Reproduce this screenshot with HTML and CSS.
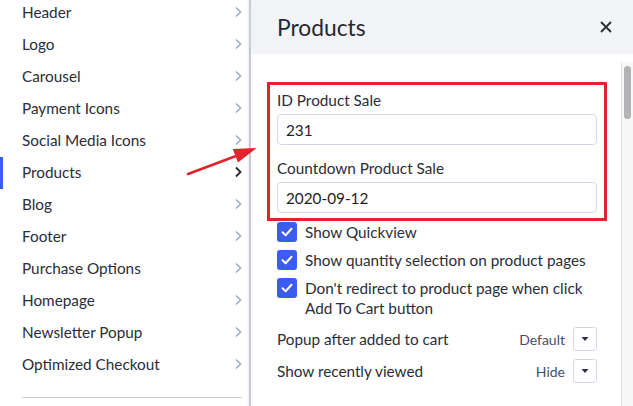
FILE: index.html
```html
<!DOCTYPE html>
<html lang="en">
<head>
<meta charset="utf-8">
<title>Products</title>
<link rel="stylesheet" href="styles.css">
</head>
<body>
<div class="app">
  <nav class="sidebar">
    <ul class="menu">
      <li class="menu-item"><span>Header</span><svg class="chev" viewBox="0 0 8 12"><path d="M2 1.5 L6.5 6 L2 10.5"/></svg></li>
      <li class="menu-item"><span>Logo</span><svg class="chev" viewBox="0 0 8 12"><path d="M2 1.5 L6.5 6 L2 10.5"/></svg></li>
      <li class="menu-item"><span>Carousel</span><svg class="chev" viewBox="0 0 8 12"><path d="M2 1.5 L6.5 6 L2 10.5"/></svg></li>
      <li class="menu-item"><span>Payment Icons</span><svg class="chev" viewBox="0 0 8 12"><path d="M2 1.5 L6.5 6 L2 10.5"/></svg></li>
      <li class="menu-item"><span>Social Media Icons</span><svg class="chev" viewBox="0 0 8 12"><path d="M2 1.5 L6.5 6 L2 10.5"/></svg></li>
      <li class="menu-item active"><span>Products</span><svg class="chev" viewBox="0 0 8 12"><path d="M2 1.5 L6.5 6 L2 10.5"/></svg></li>
      <li class="menu-item"><span>Blog</span><svg class="chev" viewBox="0 0 8 12"><path d="M2 1.5 L6.5 6 L2 10.5"/></svg></li>
      <li class="menu-item"><span>Footer</span><svg class="chev" viewBox="0 0 8 12"><path d="M2 1.5 L6.5 6 L2 10.5"/></svg></li>
      <li class="menu-item"><span>Purchase Options</span><svg class="chev" viewBox="0 0 8 12"><path d="M2 1.5 L6.5 6 L2 10.5"/></svg></li>
      <li class="menu-item"><span>Homepage</span><svg class="chev" viewBox="0 0 8 12"><path d="M2 1.5 L6.5 6 L2 10.5"/></svg></li>
      <li class="menu-item"><span>Newsletter Popup</span><svg class="chev" viewBox="0 0 8 12"><path d="M2 1.5 L6.5 6 L2 10.5"/></svg></li>
      <li class="menu-item"><span>Optimized Checkout</span><svg class="chev" viewBox="0 0 8 12"><path d="M2 1.5 L6.5 6 L2 10.5"/></svg></li>
    </ul>
    <div class="divider"></div>
  </nav>

  <section class="panel">
    <header class="panel-header">
      <h1 class="panel-title">Products</h1>
      <svg class="close" viewBox="0 0 12 12"><path d="M1 1 L11 11 M11 1 L1 11"/></svg>
    </header>
    <div class="panel-body">
      <div class="panel-content">
        <div class="highlight">
          <div class="field-label">ID Product Sale</div>
          <input class="text-input" type="text" value="231">
          <div class="field-label second">Countdown Product Sale</div>
          <input class="text-input" type="text" value="2020-09-12">
        </div>
        <div class="options">
          <div class="check-row">
            <span class="checkbox"><svg viewBox="0 0 20 20"><path d="M5.5 10.2 L8.6 13.2 L14.5 6.8"/></svg></span>
            <span class="check-text">Show Quickview</span>
          </div>
          <div class="check-row">
            <span class="checkbox"><svg viewBox="0 0 20 20"><path d="M5.5 10.2 L8.6 13.2 L14.5 6.8"/></svg></span>
            <span class="check-text">Show quantity selection on product pages</span>
          </div>
          <div class="check-row">
            <span class="checkbox"><svg viewBox="0 0 20 20"><path d="M5.5 10.2 L8.6 13.2 L14.5 6.8"/></svg></span>
            <span class="check-text">Don't redirect to product page when click Add To Cart button</span>
          </div>
          <div class="select-row first">
            <span class="select-label">Popup after added to cart</span>
            <span class="select-value">Default</span>
            <span class="select-btn"><svg viewBox="0 0 8 6"><path d="M0.5 1 L7.5 1 L4 5 Z"/></svg></span>
          </div>
          <div class="select-row">
            <span class="select-label">Show recently viewed</span>
            <span class="select-value">Hide</span>
            <span class="select-btn"><svg viewBox="0 0 8 6"><path d="M0.5 1 L7.5 1 L4 5 Z"/></svg></span>
          </div>
        </div>
      </div>
      <div class="scrollbar"><div class="thumb"></div></div>
    </div>
  </section>

  <svg class="annotation" viewBox="0 0 633 406">
    <line x1="188" y1="174" x2="240" y2="154.5"/>
    <polygon points="256.5,148 238,162.6 232.8,149"/>
  </svg>
</div>
</body>
</html>
```

FILE: styles.css
```css
* { box-sizing: border-box; }

html, body {
  margin: 0;
  padding: 0;
  background: #ffffff;
}

body {
  width: 633px;
  height: 406px;
  overflow: hidden;
  font-family: Lato, "Noto Sans", sans-serif;
  color: #2b2d38;
}

.app {
  position: relative;
  display: flex;
  width: 633px;
  height: 406px;
}

/* Sidebar */
.sidebar {
  width: 249px;
  flex: none;
  background: #ffffff;
}

.menu {
  list-style: none;
  margin: -4px 0 0 0;
  padding: 0;
}

.menu-item {
  position: relative;
  height: 32px;
  display: flex;
  align-items: center;
  justify-content: space-between;
  padding: 0 7px 0 22px;
  font-size: 15.3px;
  color: #2b2d38;
}

.menu-item.active::before {
  content: "";
  position: absolute;
  left: 0;
  top: 1px;
  width: 3px;
  height: 32px;
  background: #3c5cf0;
}

.chev {
  width: 8px;
  height: 12px;
  fill: none;
  stroke: #a7abc4;
  stroke-width: 1.6;
}

.menu-item.active .chev {
  stroke: #23252e;
  stroke-width: 1.8;
}

.divider {
  margin: 17px 7px 0 22px;
  height: 1px;
  background: #c9cde0;
}

/* Panel */
.panel {
  flex: 1;
  display: flex;
  flex-direction: column;
  border-left: 2px solid #c9cbd3;
  box-shadow: -1px 0 2px rgba(0, 0, 0, 0.08);
  background: #ffffff;
}

.panel-header {
  height: 54px;
  flex: none;
  display: flex;
  align-items: center;
  justify-content: space-between;
  padding: 0 21px 0 26px;
  background: #f3f4f8;
}

.panel-title {
  margin: 0;
  font-size: 22.8px;
  font-weight: 400;
  color: #262831;
}

.close {
  width: 12px;
  height: 12px;
  fill: none;
  stroke: #2a2c36;
  stroke-width: 1.8;
}

.panel-body {
  flex: 1;
  display: flex;
}

.panel-content {
  flex: 1;
  padding: 28px 14px 0 16px;
}

.highlight {
  border: 3px solid #e3232c;
  padding: 5px 7px 5px 7px;
}

.field-label {
  font-size: 15.3px;
  line-height: 20px;
  margin-bottom: 4px;
  color: #2b2d38;
}

.field-label.second {
  margin-top: 13px;
}

.text-input {
  display: block;
  width: 100%;
  height: 31px;
  margin: 0;
  padding: 0 8px;
  border: 1px solid #d6d8e8;
  border-radius: 4px;
  font-family: Lato, "Noto Sans", sans-serif;
  font-size: 15.3px;
  color: #1f2129;
  background: #ffffff;
  outline: none;
}

.options {
  padding: 1px 10px 0 10px;
}

.check-row {
  display: flex;
  align-items: flex-start;
  gap: 8px;
  margin-bottom: 8px;
}

.checkbox {
  flex: none;
  width: 20px;
  height: 20px;
  border-radius: 3px;
  background: #3c5cf0;
  display: flex;
}

.checkbox svg {
  width: 20px;
  height: 20px;
  fill: none;
  stroke: #ffffff;
  stroke-width: 2;
  stroke-linecap: round;
  stroke-linejoin: round;
}

.check-text {
  font-size: 15.3px;
  line-height: 20px;
  color: #2b2d38;
}

.select-row {
  display: flex;
  align-items: center;
  height: 24px;
  margin-bottom: 8px;
}

.select-row.first {
  margin-top: 9px;
}

.select-label {
  flex: 1;
  font-size: 15.3px;
  color: #2b2d38;
}

.select-value {
  font-size: 14px;
  color: #4a4e66;
  margin-right: 8px;
}

.select-btn {
  width: 24px;
  height: 24px;
  border: 1px solid #d6d8e8;
  border-radius: 3px;
  display: flex;
  align-items: center;
  justify-content: center;
}

.select-btn svg {
  width: 8px;
  height: 6px;
  fill: #2e3140;
}

.scrollbar {
  flex: none;
  width: 12px;
  margin-top: 8px;
  background: #f7f7f8;
  border-left: 1px solid #e4e4e8;
  padding: 4px 0 0 2px;
}

.thumb {
  width: 7px;
  height: 53px;
  border-radius: 4px;
  background: #b3b3b5;
}

/* Annotation overlay */
.annotation {
  position: absolute;
  left: 0;
  top: 0;
  width: 633px;
  height: 406px;
  pointer-events: none;
}

.annotation line {
  stroke: #e3232c;
  stroke-width: 2.6;
  stroke-linecap: round;
}

.annotation polygon {
  fill: #e3232c;
}
```
